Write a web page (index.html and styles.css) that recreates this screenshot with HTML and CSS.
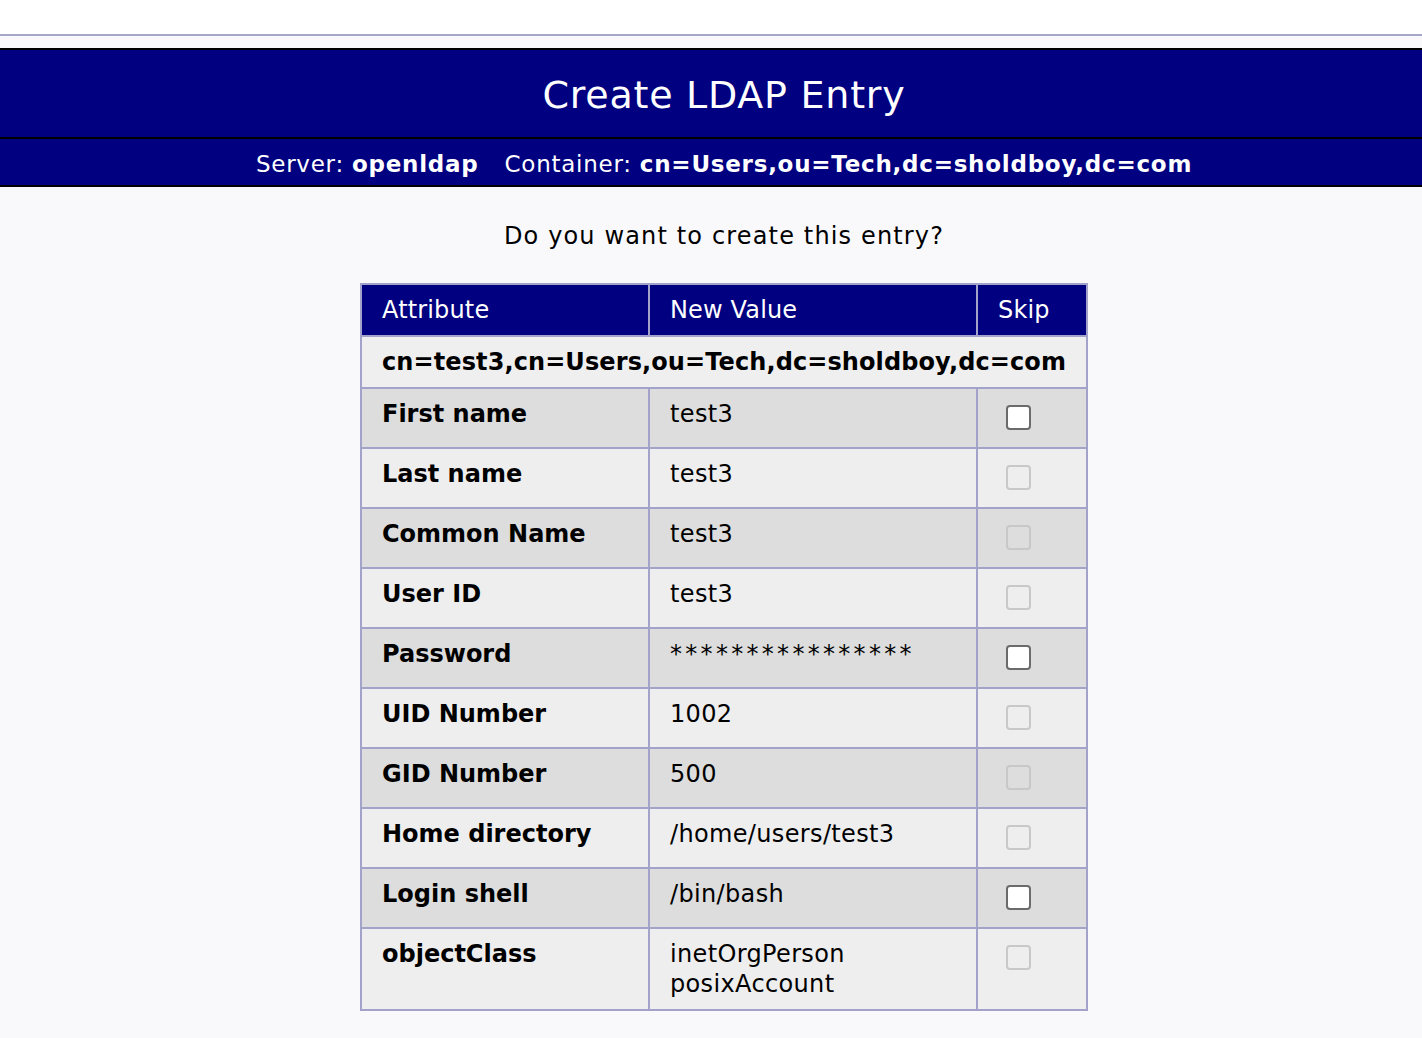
FILE: index.html
```html
<!DOCTYPE html>
<html>
<head>
<meta charset="utf-8">
<title>Create LDAP Entry</title>
<link rel="stylesheet" href="styles.css">
</head>
<body>
<div class="topframe"></div>
<div class="page">
  <div class="title-bar"><h1 class="title">Create LDAP Entry</h1></div>
  <div class="sub-bar">
    <span class="sub">Server: <b>openldap</b></span>
    <span class="sub">Container: <b>cn=Users,ou=Tech,dc=sholdboy,dc=com</b></span>
  </div>
  <p class="question">Do you want to create this entry?</p>
  <table class="entry">
    <colgroup><col class="c1"><col class="c2"><col class="c3"></colgroup>
    <thead>
      <tr><th>Attribute</th><th>New Value</th><th>Skip</th></tr>
    </thead>
    <tbody>
      <tr class="dn"><td colspan="3">cn=test3,cn=Users,ou=Tech,dc=sholdboy,dc=com</td></tr>
      <tr class="dark"><td class="attr">First name</td><td>test3</td><td><input type="checkbox" class="cb"></td></tr>
      <tr class="light"><td class="attr">Last name</td><td>test3</td><td><input type="checkbox" class="cb" disabled></td></tr>
      <tr class="dark"><td class="attr">Common Name</td><td>test3</td><td><input type="checkbox" class="cb" disabled></td></tr>
      <tr class="light"><td class="attr">User ID</td><td>test3</td><td><input type="checkbox" class="cb" disabled></td></tr>
      <tr class="dark"><td class="attr">Password</td><td class="stars">****************</td><td><input type="checkbox" class="cb"></td></tr>
      <tr class="light"><td class="attr">UID Number</td><td>1002</td><td><input type="checkbox" class="cb" disabled></td></tr>
      <tr class="dark"><td class="attr">GID Number</td><td>500</td><td><input type="checkbox" class="cb" disabled></td></tr>
      <tr class="light"><td class="attr">Home directory</td><td>/home/users/test3</td><td><input type="checkbox" class="cb" disabled></td></tr>
      <tr class="dark"><td class="attr">Login shell</td><td>/bin/bash</td><td><input type="checkbox" class="cb"></td></tr>
      <tr class="light"><td class="attr">objectClass</td><td>inetOrgPerson<br>posixAccount</td><td><input type="checkbox" class="cb" disabled></td></tr>
    </tbody>
  </table>
</div>
</body>
</html>
```
FILE: styles.css
```css
html, body {
  margin: 0;
  padding: 0;
}
body {
  background: #f9f9fc;
  font-family: "DejaVu Sans", Verdana, sans-serif;
  color: #000;
}
.topframe {
  height: 34px;
  background: #ffffff;
  border-bottom: 2px solid #a6a6c8;
}
.page {
  padding-top: 12px;
  padding-bottom: 40px;
}
.title-bar {
  background: #000080;
  border-top: 2px solid #000;
  border-bottom: 2px solid #000;
  height: 87px;
  display: flex;
  align-items: center;
  justify-content: center;
  padding-left: 26px;
}
.title {
  margin: 0;
  padding-top: 2px;
  color: #fff;
  font-weight: normal;
  font-size: 38px;
  letter-spacing: 0.75px;
}
.sub-bar {
  background: #000080;
  border-bottom: 2px solid #000;
  height: 48px;
  box-sizing: border-box;
  padding-top: 3px;
  display: flex;
  align-items: center;
  justify-content: center;
  gap: 26px;
  padding-left: 26px;
  color: #fff;
  font-size: 23px;
  letter-spacing: 0.75px;
}
.sub b {
  font-weight: bold;
}
.question {
  margin: 0;
  padding: 34px 0 0 26px;
  height: 64px;
  box-sizing: border-box;
  text-align: center;
  font-size: 24px;
  line-height: 30px;
  letter-spacing: 1.15px;
}
.entry {
  margin: 32px 0 0 360px;
  border-collapse: collapse;
  table-layout: fixed;
  width: 728px;
  border: 2px solid #a2a2ca;
  font-size: 24px;
}
.c1 { width: 288px; }
.c2 { width: 328px; }
.c3 { width: 110px; }
.entry th, .entry td {
  border: 2px solid #a2a2ca;
  padding: 10px 20px;
  text-align: left;
  vertical-align: top;
  line-height: 30px;
}
.entry th {
  background: #000080;
  color: #fff;
  font-weight: normal;
  height: 30px;
  letter-spacing: 0.15px;
}
.entry td {
  height: 38px;
  letter-spacing: 0.35px;
}
.entry tr.dn td {
  background: #efefef;
  font-weight: bold;
  letter-spacing: 0.1px;
  height: 30px;
}
.entry tr.dark td { background: #dcdddc; }
.entry tr.light td { background: #eeeeee; }
.entry td.attr {
  font-weight: bold;
  letter-spacing: 0;
}
.entry td.stars {
  letter-spacing: 3.3px;
}
.cb {
  appearance: none;
  -webkit-appearance: none;
  width: 25px;
  height: 25px;
  margin: 6px 0 0 8px;
  border: 2px solid #6b6b6b;
  border-radius: 4px;
  background: #fff;
  box-sizing: border-box;
  display: block;
}
.cb:disabled {
  border-color: #c8c8c8;
  background: transparent;
}
```
